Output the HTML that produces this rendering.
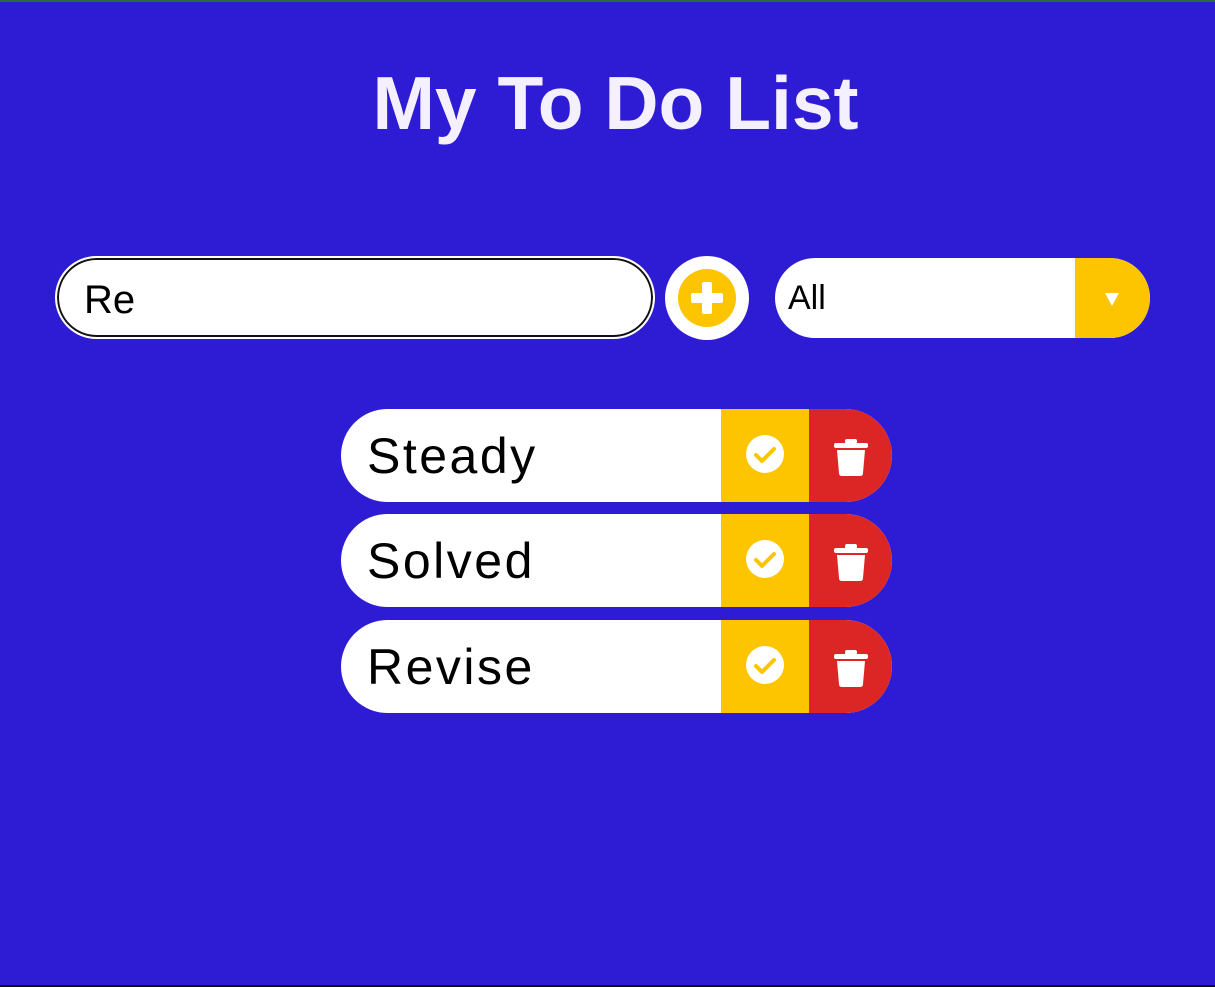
<!DOCTYPE html>
<html><head><style>
html,body{margin:0;padding:0}
body{width:1215px;height:987px;background:#2e1cd4;position:relative;overflow:hidden;font-family:"Liberation Sans",sans-serif}
.top{position:absolute;left:0;top:0;width:1215px;height:2px;background:#2f6b3a}
.bot{position:absolute;left:0;bottom:0;width:1215px;height:2px;background:#111}
h1{position:absolute;top:60px;left:8px;width:1215px;text-align:center;margin:0;color:#f4f0ff;font-size:75px;font-weight:bold;letter-spacing:0}
.inp{position:absolute;left:55px;top:256px;width:596px;height:79px;border-radius:42px;background:#fff;border:2px solid #fff;box-shadow:inset 0 0 0 2px #111}
.inp span{position:absolute;left:27px;top:20px;font-size:40px;color:#000}
.add{position:absolute;left:665px;top:256px;width:84px;height:84px;border-radius:50%;background:#fff}
.add .c{position:absolute;left:13px;top:13px;width:58px;height:58px;border-radius:50%;background:#fcc500}
.sel{position:absolute;left:775px;top:258px;width:375px;height:80px;border-radius:40px;background:#fff;overflow:hidden}
.sel span{position:absolute;left:13px;top:21px;font-size:34px;color:#000}
.sel .y{position:absolute;right:0;top:0;width:75px;height:80px;background:#fcc500}
.todo{position:absolute;left:341px;width:551px;height:93px;border-radius:47px;background:#fff;overflow:hidden}
.todo span{position:absolute;left:26px;top:18px;font-size:50px;color:#000;letter-spacing:2.5px}
.todo .y{position:absolute;left:380px;top:0;width:88px;height:93px;background:#fcc500}
.todo .r{position:absolute;left:468px;top:0;width:83px;height:93px;background:#dc2626}
</style></head><body>
<div class="top"></div><div class="bot"></div>
<h1>My To Do List</h1>
<div class="inp"><span>Re</span></div>
<div class="add"><div class="c"><svg width="58" height="58" viewBox="0 0 58 58"><rect x="24" y="13" width="10" height="32" rx="2" fill="#fff"/><rect x="13" y="24" width="32" height="10" rx="2" fill="#fff"/></svg></div></div>
<div class="sel"><span>All</span><div class="y"><svg width="75" height="80"><polygon points="30,35 44,35 37,48" fill="#fff"/></svg></div></div>

<div class="todo" style="top:409px"><span>Steady</span><div class="y"><svg width="88" height="93"><circle cx="44" cy="45" r="19" fill="#fff"/><path d="M35 46 L41 52 L53 40" stroke="#fcc500" stroke-width="4" fill="none" stroke-linecap="round" stroke-linejoin="round"/></svg></div><div class="r"><svg width="83" height="93"><rect x="25" y="34" width="34" height="5" rx="2" fill="#fff"/><rect x="36" y="30" width="12" height="5" rx="2" fill="#fff"/><path d="M28 41 H56 L54 64 Q54 67 51 67 H33 Q30 67 30 64 Z" fill="#fff"/></svg></div></div>
<div class="todo" style="top:514px"><span>Solved</span><div class="y"><svg width="88" height="93"><circle cx="44" cy="45" r="19" fill="#fff"/><path d="M35 46 L41 52 L53 40" stroke="#fcc500" stroke-width="4" fill="none" stroke-linecap="round" stroke-linejoin="round"/></svg></div><div class="r"><svg width="83" height="93"><rect x="25" y="34" width="34" height="5" rx="2" fill="#fff"/><rect x="36" y="30" width="12" height="5" rx="2" fill="#fff"/><path d="M28 41 H56 L54 64 Q54 67 51 67 H33 Q30 67 30 64 Z" fill="#fff"/></svg></div></div>
<div class="todo" style="top:620px"><span>Revise</span><div class="y"><svg width="88" height="93"><circle cx="44" cy="45" r="19" fill="#fff"/><path d="M35 46 L41 52 L53 40" stroke="#fcc500" stroke-width="4" fill="none" stroke-linecap="round" stroke-linejoin="round"/></svg></div><div class="r"><svg width="83" height="93"><rect x="25" y="34" width="34" height="5" rx="2" fill="#fff"/><rect x="36" y="30" width="12" height="5" rx="2" fill="#fff"/><path d="M28 41 H56 L54 64 Q54 67 51 67 H33 Q30 67 30 64 Z" fill="#fff"/></svg></div></div>
</body></html>
